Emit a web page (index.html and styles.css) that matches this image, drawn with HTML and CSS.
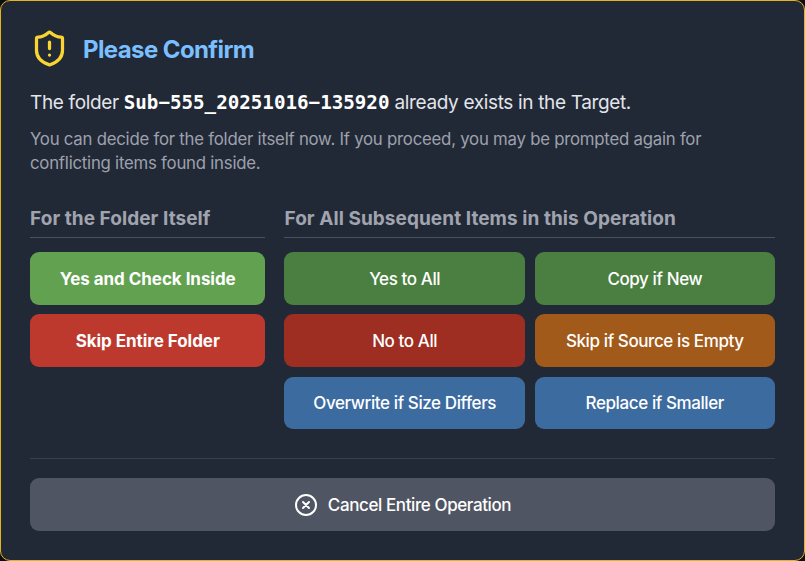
FILE: index.html
```html
<!DOCTYPE html>
<html lang="en">
<head>
<meta charset="utf-8">
<title>Please Confirm</title>
<link rel="stylesheet" href="styles.css">
</head>
<body>
<main class="dialog">
  <header class="header">
    <svg class="shield" viewBox="0 0 24 24" fill="none" stroke="currentColor" stroke-width="2" stroke-linecap="round" stroke-linejoin="round"><path d="M20 13c0 5-3.500 7.500-7.660 8.950a1 1 0 0 1-.67-.01C7.500 20.500 4 18 4 13V6a1 1 0 0 1 1-1c2 0 4.500-1.200 6.240-2.720a1.170 1.170 0 0 1 1.520 0C14.510 3.810 17 5 19 5a1 1 0 0 1 1 1z"/><path d="M12 8v4M12 16h.01"/></svg>
    <h1 class="title">Please Confirm</h1>
  </header>
  <p class="message">The folder <strong class="name">Sub−555_20251016−135920</strong> already exists in the Target.</p>
  <p class="hint">You can decide for the folder itself now. If you proceed, you may be prompted again for<br>conflicting items found inside.</p>
  <div class="columns">
    <section>
      <h2 class="heading">For the Folder Itself</h2>
      <div class="stack">
        <button class="btn strong green">Yes and Check Inside</button>
        <button class="btn strong red">Skip Entire Folder</button>
      </div>
    </section>
    <section>
      <h2 class="heading">For All Subsequent Items in this Operation</h2>
      <div class="stack pair">
        <button class="btn dark-green">Yes to All</button>
        <button class="btn dark-green">Copy if New</button>
        <button class="btn dark-red">No to All</button>
        <button class="btn orange">Skip if Source is Empty</button>
        <button class="btn blue">Overwrite if Size Differs</button>
        <button class="btn blue">Replace if Smaller</button>
      </div>
    </section>
  </div>
  <footer class="footer">
    <button class="btn cancel"><svg class="cross" viewBox="0 0 24 24" fill="none" stroke="currentColor" stroke-width="2" stroke-linecap="round" stroke-linejoin="round"><circle cx="12" cy="12" r="10"/><path d="m15 9-6 6M9 9l6 6"/></svg>Cancel Entire Operation</button>
  </footer>
</main>
</body>
</html>
```
FILE: styles.css
```css
* { box-sizing: border-box; }
body { margin: 0; background: #0c0e14; font-family: Inter, "Liberation Sans", sans-serif; }
h1, h2, p { margin: 0; }
.dialog { width: 805px; height: 561px; padding: 29px 29px 0; border: 1px solid #e5b31d; border-radius: 10px; background: #222936; }
.header { display: flex; align-items: center; gap: 14px; height: 38px; }
.shield { width: 39px; height: 39px; margin-top: -1px; color: #fad532; }
.title { padding-top: 2px; font-size: 24px; line-height: 38px; font-weight: 700; letter-spacing: -0.600px; color: #7abfff; }
.message { margin-top: 20px; font-size: 19px; line-height: 30px; letter-spacing: -0.350px; color: #e2e5ea; white-space: nowrap; }
.name { font-family: "DejaVu Sans Mono", monospace; font-size: 19.200px; letter-spacing: 0; line-height: 1; color: #fff; }
.hint { margin-top: 8.500px; font-size: 16.800px; line-height: 24.300px; letter-spacing: -0.240px; color: #9da1ad; white-space: nowrap; }
.columns { display: grid; grid-template-columns: 235.400px 490.500px; gap: 19.100px; margin-top: 28px; }
.heading { height: 34.500px; border-bottom: 1px solid #4b515e; font-size: 19px; line-height: 31.500px; font-weight: 700; letter-spacing: 0.060px; color: #a0a4af; white-space: nowrap; }
.stack { display: grid; gap: 9.700px; margin-top: 14.500px; }
.pair { grid-template-columns: 1fr 1fr; }
.btn { display: flex; align-items: center; justify-content: center; width: 100%; height: 52.600px; padding: 1px 0 0; border: 0; border-radius: 9px; color: #fff; font: 500 17px Inter, "Liberation Sans", sans-serif; letter-spacing: -0.400px; white-space: nowrap; }
.strong { font-weight: 700; letter-spacing: -0.050px; }
.green { background: #61a150; }
.red { background: #bd392d; }
.dark-green { background: #4b7f41; }
.dark-red { background: #9e2d22; }
.orange { background: #a15a19; }
.blue { background: #3c6b9f; }
.footer { margin-top: 29px; padding-top: 19px; border-top: 1px solid #394050; }
.cancel { gap: 10px; padding-top: 0; background: #4f5562; }
.cross { width: 24px; height: 24px; }
```
